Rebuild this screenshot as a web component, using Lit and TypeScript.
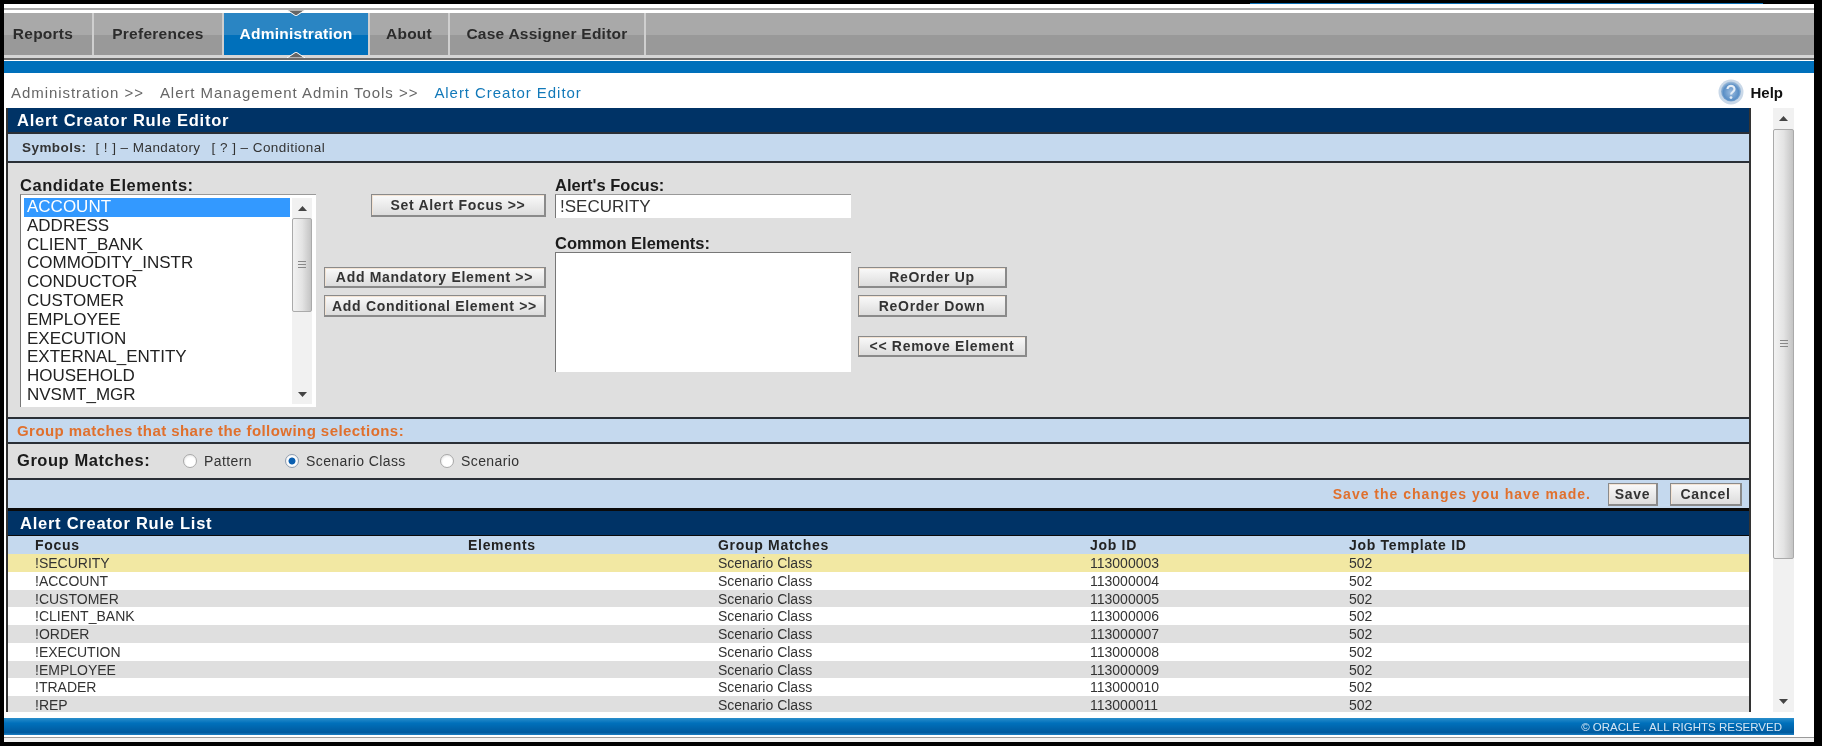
import { LitElement, html, css } from 'lit';
import { customElement } from 'lit/decorators.js';

const TABS = ['Reports', 'Preferences', 'Administration', 'About', 'Case Assigner Editor'];

const CANDIDATES = [
    'ACCOUNT',
    'ADDRESS',
    'CLIENT_BANK',
    'COMMODITY_INSTR',
    'CONDUCTOR',
    'CUSTOMER',
    'EMPLOYEE',
    'EXECUTION',
    'EXTERNAL_ENTITY',
    'HOUSEHOLD',
    'NVSMT_MGR',
];

const RULES = [
    ['!SECURITY', '113000003'],
    ['!ACCOUNT', '113000004'],
    ['!CUSTOMER', '113000005'],
    ['!CLIENT_BANK', '113000006'],
    ['!ORDER', '113000007'],
    ['!EXECUTION', '113000008'],
    ['!EMPLOYEE', '113000009'],
    ['!TRADER', '113000010'],
    ['!REP', '113000011'],
];

@customElement('app-root')
export class AppRoot extends LitElement {
    static styles = css`
        :host {
            display: block;
            width: 1822px;
            height: 746px;
            box-sizing: border-box;
            padding: 0 8px 4px 4px;
            background: #000;
            overflow: hidden;
            font-family: 'Liberation Sans', Arial, sans-serif;
            color: #222;
            filter: blur(0.5px);
        }

        .frame {
            height: 742px;
            background: #fff;
            display: flex;
            flex-direction: column;
        }

        /* window chrome above the tabs */
        .top-strip {
            height: 4px;
            background: #000;
            flex: none;
            padding-left: 1246px;
        }
        .top-strip div {
            width: 513px;
            height: 1px;
            margin-top: 3px;
            background: #0a6fb5;
        }
        .top-lines {
            height: 9px;
            flex: none;
            box-sizing: border-box;
            padding-top: 4px;
            background: #fff;
        }
        .top-lines div {
            height: 2px;
            background: #a9a9a9;
        }

        .nav {
            height: 42px;
            flex: none;
            display: flex;
            background: linear-gradient(#a9a9a9 0, #a9a9a9 52%, #999 52%, #999 100%);
        }
        .tab {
            position: relative;
            display: flex;
            align-items: center;
            justify-content: center;
            box-sizing: border-box;
            border-right: 2px solid #cfcfcf;
            font-size: 15.5px;
            font-weight: bold;
            letter-spacing: 0.25px;
            color: #2c2c2c;
        }
        .tab:first-child {
            padding-right: 10px;
        }
        .tab.active {
            background: linear-gradient(#2a85c3 0, #2a85c3 52%, #0070bb 52%, #0070bb 100%);
            color: #fff;
        }
        .notch {
            position: absolute;
            left: 50%;
            margin-left: -9px;
            width: 18px;
            height: 6px;
        }
        .notch.up {
            top: -3px;
        }
        .notch.down {
            bottom: -3px;
        }

        .nav-foot {
            height: 6px;
            flex: none;
            background: linear-gradient(#d6d6d6 0, #d6d6d6 3px, #6b6b6b 3px, #6b6b6b 5px, #fff 5px);
        }
        .blue-band {
            height: 12px;
            flex: none;
            background: #0070bb;
        }

        .crumbs-row {
            height: 35px;
            flex: none;
            box-sizing: border-box;
            display: flex;
            align-items: center;
            padding: 3px 31px 0 7px;
            font-size: 15px;
            letter-spacing: 0.95px;
            color: #666;
        }
        .crumb {
            margin-right: 16px;
        }
        .crumb.current {
            color: #1279b9;
            margin: 0;
        }
        .help {
            margin-left: auto;
            display: flex;
            align-items: center;
            gap: 6px;
            font-size: 15px;
            font-weight: bold;
            letter-spacing: 0;
            color: #111;
        }

        .content {
            flex: none;
            height: 604px;
            display: flex;
        }

        .panel {
            width: 1745px;
            margin-left: 2px;
            box-sizing: border-box;
            border-left: 2px solid #333;
            border-right: 2px solid #333;
            display: flex;
            flex-direction: column;
            overflow: hidden;
        }
        .title {
            flex: none;
            height: 24px;
            background: #003366;
            color: #fff;
            font-size: 16.5px;
            font-weight: bold;
            letter-spacing: 0.75px;
            line-height: 24px;
            padding-left: 9px;
        }
        .band {
            flex: none;
            background: #c5d9ee;
            border-top: 2px solid #2a2f36;
            display: flex;
            align-items: center;
        }
        .symbols {
            height: 27px;
            padding-left: 14px;
            font-size: 13.5px;
            letter-spacing: 0.45px;
            color: #333;
        }
        .symbols b {
            margin-right: 9px;
        }
        .symbols span {
            margin-right: 11px;
        }
        .group-note {
            height: 23px;
            padding-left: 9px;
            font-size: 15px;
            letter-spacing: 0.44px;
            font-weight: bold;
            color: #e0702d;
        }

        .editor {
            flex: none;
            height: 256px;
            box-sizing: border-box;
            padding: 13px 0 0 12px;
            background: #dfdfdf;
            border-top: 2px solid #2a2f36;
            display: flex;
        }
        .label {
            height: 18px;
            line-height: 18px;
            font-size: 16.5px;
            font-weight: bold;
            color: #1b1b1b;
        }
        .label.spaced {
            letter-spacing: 0.55px;
        }

        .candidates {
            width: 296px;
            height: 213px;
            box-sizing: border-box;
            padding: 3px 5px 3px 3px;
            background: #fff;
            border-left: 1px solid #777;
            border-top: 1px solid #999;
            display: flex;
        }
        .options {
            width: 266px;
            flex: none;
            font-size: 17px;
            color: #222;
        }
        .option {
            height: 18.8px;
            line-height: 18.8px;
            padding-left: 3px;
            white-space: nowrap;
        }
        .option.selected {
            background: #3399ff;
            color: #fff;
        }

        .scrollbar {
            flex: none;
            background: #f1f1f1;
            display: flex;
            flex-direction: column;
            align-items: stretch;
        }
        .candidates .scrollbar {
            width: 20px;
            margin-left: 2px;
        }
        .arrow {
            flex: none;
            height: 20px;
            display: flex;
            align-items: center;
            justify-content: center;
        }
        .thumb {
            flex: none;
            box-sizing: border-box;
            border: 1px solid #aaa;
            border-radius: 2px;
            background: linear-gradient(90deg, #f2f2f2, #e4e4e4 50%, #c4c4c4);
            display: flex;
            align-items: center;
            justify-content: center;
        }
        .track {
            flex: 1;
        }

        .add-col {
            width: 222px;
            margin: 18px 0 0 8px;
            display: flex;
            flex-direction: column;
            align-items: flex-end;
        }
        button {
            box-sizing: border-box;
            padding: 0;
            border: 1px solid #8a8a8a;
            border-right-width: 2px;
            border-bottom-width: 2px;
            background: linear-gradient(#fafafa, #dcdcdc);
            box-shadow: inset 1px 1px 0 #f3e3d3;
            font-family: inherit;
            font-size: 14px;
            font-weight: bold;
            letter-spacing: 0.7px;
            color: #333;
            white-space: nowrap;
        }
        .set-focus {
            width: 175px;
            height: 23px;
            margin-bottom: 50px;
        }
        .wide {
            width: 222px;
        }
        .h21 {
            height: 21px;
            margin-bottom: 7px;
        }
        .h22 {
            height: 22px;
        }

        .focus-col {
            width: 296px;
            margin-left: 9px;
        }
        .focus-input {
            display: block;
            width: 296px;
            height: 24px;
            box-sizing: border-box;
            padding: 0 0 0 4px;
            margin: 0 0 16px;
            border: none;
            border-left: 1px solid #777;
            border-top: 1px solid #999;
            background: #fff;
            font-family: inherit;
            font-size: 17px;
            color: #333;
            outline: none;
        }
        .common {
            height: 120px;
            box-sizing: border-box;
            background: #fff;
            border-left: 1px solid #777;
            border-top: 1px solid #777;
        }

        .order-col {
            margin: 91px 0 0 7px;
            display: flex;
            flex-direction: column;
            align-items: flex-start;
        }
        .order {
            width: 149px;
        }
        .remove {
            width: 169px;
            height: 21px;
            margin-top: 19px;
        }

        .matches {
            flex: none;
            height: 36px;
            box-sizing: border-box;
            padding-left: 9px;
            background: #dfdfdf;
            border-top: 2px solid #2a2f36;
            display: flex;
            align-items: center;
        }
        .matches .label {
            width: 166px;
            flex: none;
            margin-bottom: 2px;
        }
        .radio {
            display: flex;
            align-items: center;
            font-size: 14px;
            letter-spacing: 0.4px;
            color: #333;
        }
        .radio input {
            appearance: none;
            width: 14px;
            height: 14px;
            margin: 0 7px 0 0;
            flex: none;
            border-radius: 50%;
            border: 1px solid #aaa;
            background: radial-gradient(circle at 55% 60%, #fff 45%, #d8d8d8);
        }
        .radio input:checked {
            border-color: #8e9db0;
            background: radial-gradient(circle, #0a5fb0 0, #0a5fb0 36%, #fff 46%, #e8e8e8);
        }
        .r-pattern {
            width: 102px;
        }
        .r-class {
            width: 155px;
        }

        .actions {
            height: 28px;
            justify-content: flex-end;
            padding-right: 7px;
        }
        .actions span {
            font-size: 14px;
            font-weight: bold;
            letter-spacing: 1px;
            color: #e0702d;
            margin-right: 17px;
        }
        .save {
            width: 50px;
            height: 23px;
            margin-right: 12px;
        }
        .cancel {
            width: 72px;
            height: 23px;
        }

        .list-title {
            border-top: 3px solid #0a0a0a;
            border-bottom: 1px solid #0a0a0a;
            padding-left: 12px;
        }

        .head,
        .row {
            flex: none;
            display: grid;
            grid-template-columns: 433px 250px 372px 259px 1fr;
            padding-left: 27px;
            font-size: 14px;
            white-space: nowrap;
        }
        .head {
            height: 18px;
            line-height: 18px;
            background: #c5d9ee;
            font-weight: bold;
            letter-spacing: 0.7px;
            color: #222;
        }
        .row {
            height: 17.75px;
            line-height: 18px;
            color: #333;
            background: #fff;
        }
        .row:nth-child(odd) {
            background: #dfdfdf;
        }
        .row.highlight {
            background: #f2e8a3;
        }

        .page-scroll {
            width: 21px;
            margin-left: 22px;
            flex: none;
        }
        .page-scroll .arrow {
            height: 21px;
        }

        .footer {
            flex: none;
            width: 1790px;
            height: 17px;
            margin-top: 6px;
            box-sizing: border-box;
            padding-right: 12px;
            background: linear-gradient(#2a8ecb, #0070bb 30%, #005a9e 85%, #1a7fc4);
            display: flex;
            align-items: center;
            justify-content: flex-end;
            font-size: 11.5px;
            color: #d4e6f4;
        }
        .base-lines {
            flex: 1;
            background: linear-gradient(#fff 0, #fff 2px, #9a9a9a 2px, #9a9a9a 3px, #f2f2f2 3px);
        }
    `;

    private _renderArrow(up: boolean) {
        return html`<div class="arrow">
            <svg width="9" height="5" viewBox="0 0 9 5">
                <path d=${up ? 'M0 5 L4.5 0 L9 5 Z' : 'M0 0 L9 0 L4.5 5 Z'} fill="#444"></path>
            </svg>
        </div>`;
    }

    private _renderGrip() {
        return html`<svg width="8" height="8" viewBox="0 0 8 8">
            <path d="M0 .5H8M0 3.5H8M0 6.5H8" stroke="#888" stroke-width="1"></path>
        </svg>`;
    }

    private _renderHelpIcon() {
        return html`<svg width="26" height="26" viewBox="0 0 26 26">
            <defs>
                <radialGradient id="helpfill" cx="50%" cy="55%" r="55%">
                    <stop offset="0" stop-color="#9dbde0"></stop>
                    <stop offset="0.7" stop-color="#5a8fc6"></stop>
                    <stop offset="1" stop-color="#a9c3dc"></stop>
                </radialGradient>
            </defs>
            <circle cx="13" cy="13" r="12.5" fill="#c9d8e8"></circle>
            <circle cx="13" cy="12.5" r="10" fill="url(#helpfill)"></circle>
            <path
                d="M9.5 10 a3.5 3.2 0 1 1 5.4 2.8 c-1.2 .8 -1.8 1.3 -1.8 2.6"
                fill="none"
                stroke="#e4edf6"
                stroke-width="2.2"
            ></path>
            <circle cx="13" cy="18.6" r="1.4" fill="#e4edf6"></circle>
        </svg>`;
    }

    private _renderNotch(up: boolean) {
        return html`<svg class="notch ${up ? 'up' : 'down'}" viewBox="0 0 18 6">
            <path
                d=${up ? 'M0 0 H18 L9 6 Z' : 'M0 6 H18 L9 0 Z'}
                fill="#666"
                stroke="#fff"
                stroke-width="1"
            ></path>
        </svg>`;
    }

    render() {
        const tabWidths = [90, 130, 146, 80, 196];
        return html`
            <div class="frame">
                <div class="top-strip"><div></div></div>
                <div class="top-lines"><div></div></div>
                <div class="nav">
                    ${TABS.map(
                        (t, i) => html`<div
                            class="tab ${t === 'Administration' ? 'active' : ''}"
                            style="width:${tabWidths[i]}px"
                        >
                            ${t}
                            ${t === 'Administration'
                                ? html`${this._renderNotch(true)}${this._renderNotch(false)}`
                                : ''}
                        </div>`,
                    )}
                </div>
                <div class="nav-foot"></div>
                <div class="blue-band"></div>

                <div class="crumbs-row">
                    <span class="crumb">Administration &gt;&gt;</span>
                    <span class="crumb">Alert Management Admin Tools &gt;&gt;</span>
                    <span class="crumb current">Alert Creator Editor</span>
                    <span class="help">${this._renderHelpIcon()}Help</span>
                </div>

                <div class="content">
                    <div class="panel">
                        <div class="title">Alert Creator Rule Editor</div>
                        <div class="band symbols">
                            <b>Symbols:</b>
                            <span>[ ! ] – Mandatory</span>
                            <span>[ ? ] – Conditional</span>
                        </div>

                        <div class="editor">
                            <div>
                                <div class="label spaced">Candidate Elements:</div>
                                <div class="candidates">
                                    <div class="options">
                                        ${CANDIDATES.map(
                                            (c, i) => html`<div
                                                class="option ${i === 0 ? 'selected' : ''}"
                                            >
                                                ${c}
                                            </div>`,
                                        )}
                                    </div>
                                    <div class="scrollbar">
                                        ${this._renderArrow(true)}
                                        <div class="thumb" style="height:94px">
                                            ${this._renderGrip()}
                                        </div>
                                        <div class="track"></div>
                                        ${this._renderArrow(false)}
                                    </div>
                                </div>
                            </div>

                            <div class="add-col">
                                <button class="set-focus">Set Alert Focus &gt;&gt;</button>
                                <button class="wide h21">Add Mandatory Element &gt;&gt;</button>
                                <button class="wide h22">Add Conditional Element &gt;&gt;</button>
                            </div>

                            <div class="focus-col">
                                <div class="label">Alert's Focus:</div>
                                <input class="focus-input" value="!SECURITY" readonly />
                                <div class="label">Common Elements:</div>
                                <div class="common"></div>
                            </div>

                            <div class="order-col">
                                <button class="order h21">ReOrder Up</button>
                                <button class="order h22">ReOrder Down</button>
                                <button class="remove">&lt;&lt; Remove Element</button>
                            </div>
                        </div>

                        <div class="band group-note">
                            Group matches that share the following selections:
                        </div>

                        <div class="matches">
                            <div class="label spaced">Group Matches:</div>
                            <label class="radio r-pattern">
                                <input type="radio" name="group" />Pattern
                            </label>
                            <label class="radio r-class">
                                <input type="radio" name="group" checked />Scenario Class
                            </label>
                            <label class="radio">
                                <input type="radio" name="group" />Scenario
                            </label>
                        </div>

                        <div class="band actions">
                            <span>Save the changes you have made.</span>
                            <button class="save">Save</button>
                            <button class="cancel">Cancel</button>
                        </div>

                        <div class="title list-title">Alert Creator Rule List</div>
                        <div class="head">
                            <div>Focus</div>
                            <div>Elements</div>
                            <div>Group Matches</div>
                            <div>Job ID</div>
                            <div>Job Template ID</div>
                        </div>
                        <div>
                            ${RULES.map(
                                (r, i) => html`<div class="row ${i === 0 ? 'highlight' : ''}">
                                    <div>${r[0]}</div>
                                    <div></div>
                                    <div>Scenario Class</div>
                                    <div>${r[1]}</div>
                                    <div>502</div>
                                </div>`,
                            )}
                        </div>
                    </div>

                    <div class="scrollbar page-scroll">
                        ${this._renderArrow(true)}
                        <div class="thumb" style="height:430px">${this._renderGrip()}</div>
                        <div class="track"></div>
                        ${this._renderArrow(false)}
                    </div>
                </div>

                <div class="footer">© ORACLE . ALL RIGHTS RESERVED</div>
                <div class="base-lines"></div>
            </div>
        `;
    }
}
